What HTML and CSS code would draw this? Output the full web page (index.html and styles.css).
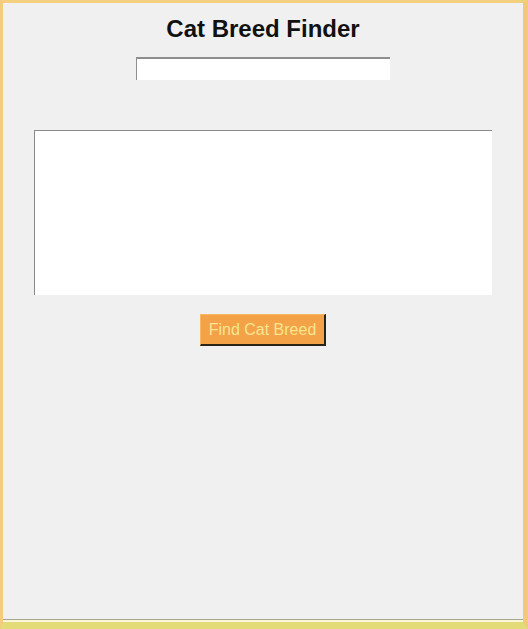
FILE: index.html
```html
<!DOCTYPE html>
<html>
<head>
<meta charset="utf-8">
<title>Cat Breed Finder</title>
<link rel="stylesheet" href="styles.css">
</head>
<body>
<div class="frame">
  <div class="app">
    <h1 class="title">Cat Breed Finder</h1>
    <input class="query" type="text">
    <textarea class="result"></textarea>
    <button class="find">Find Cat Breed</button>
  </div>
</div>
</body>
</html>
```
FILE: styles.css
```css
html, body {
  margin: 0;
  padding: 0;
  background: #e3da7a;
}
.frame {
  box-sizing: border-box;
  width: 528px;
  height: 629px;
  border-style: solid;
  border-color: #f3cf7f #f3c87a #e2db78 #f3cc7c;
  border-width: 3px 5px 7px 3px;
  background: #f0f0f0;
  box-shadow: inset 0 -2px 0 #fbf6d8, inset 0 -3px 0 #a8a68a;
}
.app {
  display: flex;
  flex-direction: column;
  align-items: center;
  padding-top: 12px;
}
.title {
  margin: 0;
  font-family: "Liberation Sans", Arial, sans-serif;
  font-weight: bold;
  font-size: 24px;
  line-height: 28px;
  color: #111;
}
.query {
  box-sizing: border-box;
  margin: 14px 0 0 0;
  width: 254px;
  height: 23px;
  padding: 0;
  border: none;
  border-top: 2px solid #8e8e8e;
  border-left: 1px solid #8e8e8e;
  background: #fff;
  outline: none;
}
.result {
  box-sizing: border-box;
  margin: 50px 0 0 0;
  width: 458px;
  height: 165px;
  padding: 0;
  border: none;
  border-top: 1px solid #8a8a8a;
  border-left: 1px solid #8a8a8a;
  background: #fff;
  resize: none;
  outline: none;
}
.find {
  box-sizing: border-box;
  margin-top: 19px;
  width: 126px;
  height: 32px;
  padding: 0;
  background: #f3a247;
  border-style: solid;
  border-width: 1px 2px 2px 1px;
  border-color: #f6b861 #2a2418 #2a2418 #f6b861;
  color: #f6e690;
  font-family: "Liberation Sans", Arial, sans-serif;
  font-size: 16px;
}
```
